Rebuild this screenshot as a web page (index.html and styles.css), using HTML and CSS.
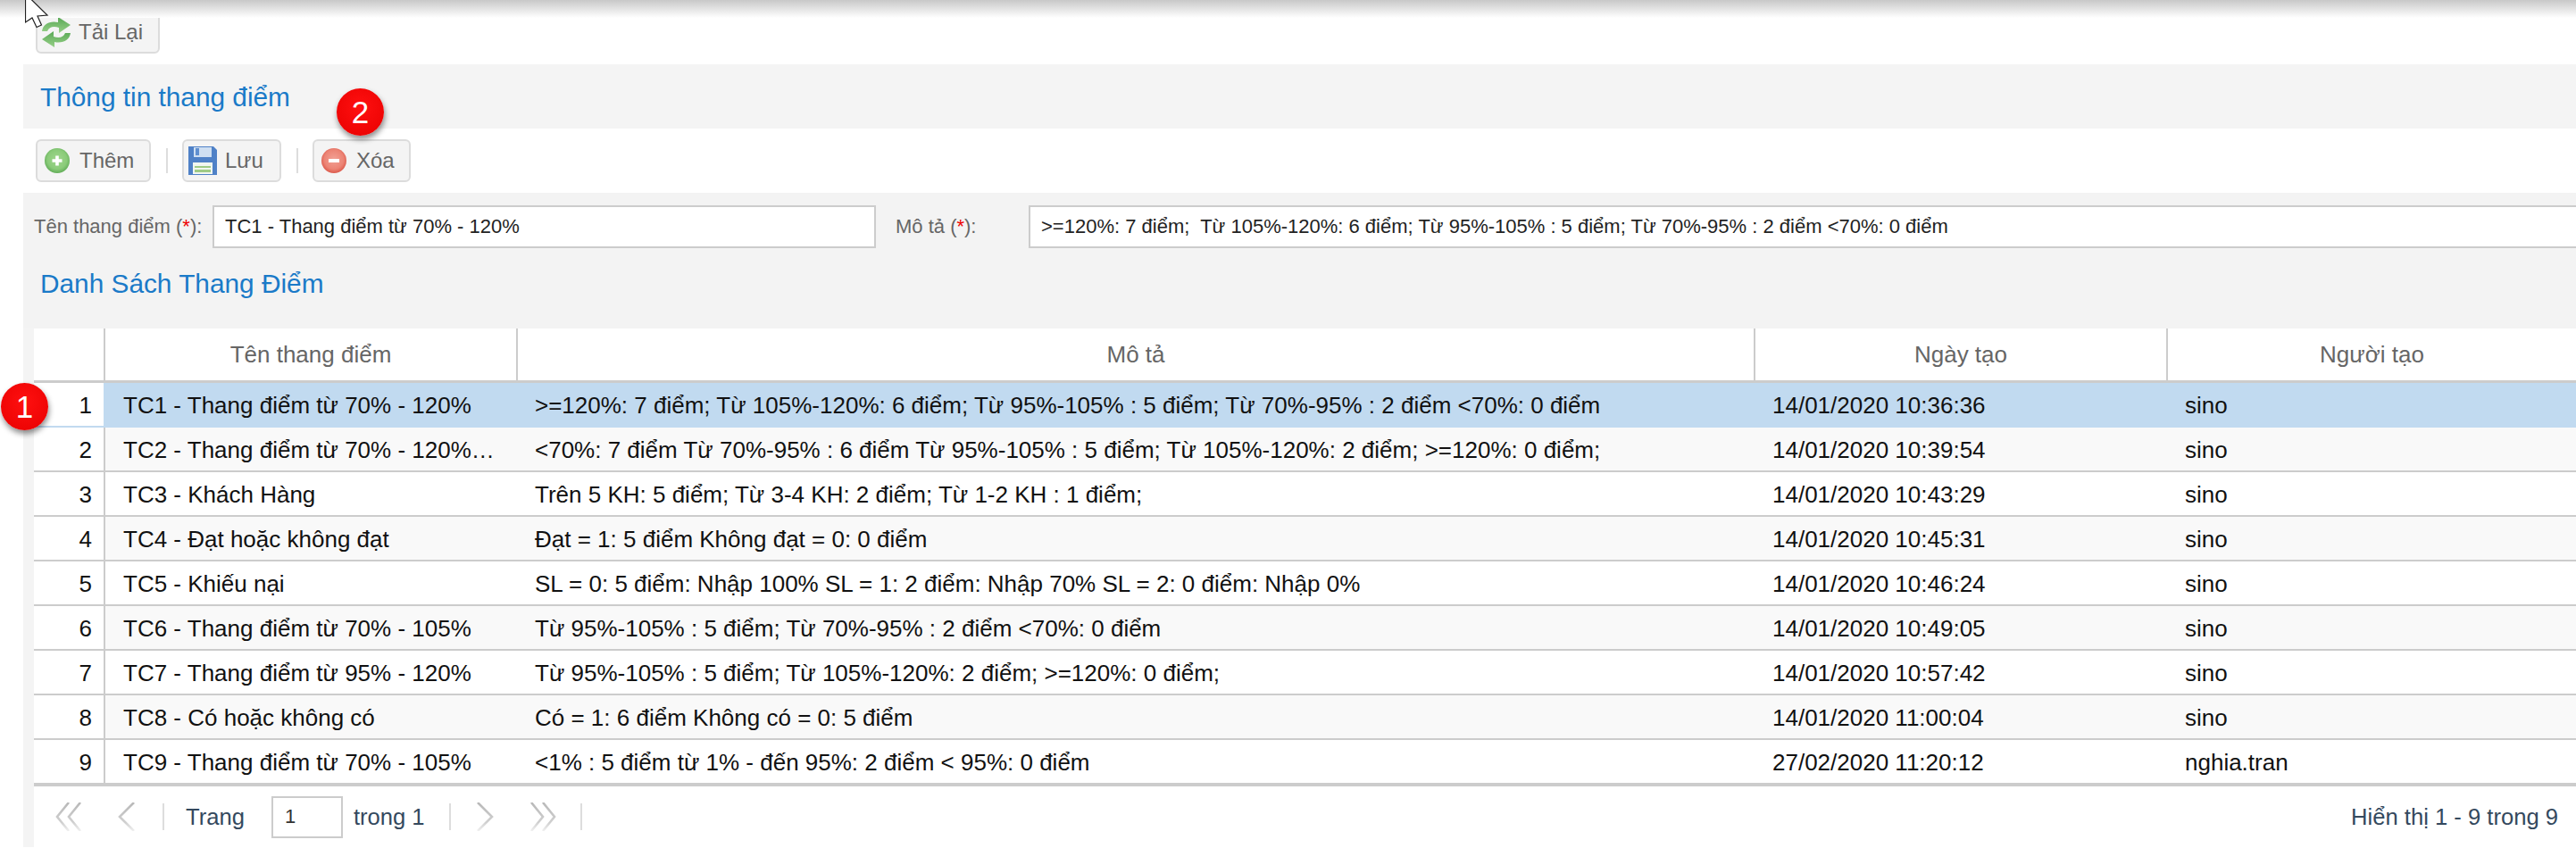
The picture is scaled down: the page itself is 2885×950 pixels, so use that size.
FILE: index.html
```html
<!DOCTYPE html>
<html lang="vi">
<head>
  <meta charset="UTF-8">
  <title>Thang điểm</title>
  <link rel="stylesheet" href="styles.css">
</head>
<body>
  <svg class="defs" width="0" height="0">
    <defs>
      <linearGradient id="fade" gradientUnits="userSpaceOnUse" x1="0" y1="0" x2="0" y2="32">
        <stop offset="0" stop-color="#b8b8b8"/>
        <stop offset="0.7" stop-color="#d0d0d0"/>
        <stop offset="1" stop-color="#f0f0f0"/>
      </linearGradient>
      <linearGradient id="arrow" x1="0" y1="0" x2="0" y2="1">
        <stop offset="0" stop-color="#58a855"/>
        <stop offset="1" stop-color="#97d088"/>
      </linearGradient>
      <radialGradient id="green" cx="0.5" cy="0.45" r="0.55">
        <stop offset="0" stop-color="#a0d78e"/>
        <stop offset="0.7" stop-color="#8acb79"/>
        <stop offset="1" stop-color="#62ad58"/>
      </radialGradient>
      <radialGradient id="red" cx="0.5" cy="0.45" r="0.55">
        <stop offset="0" stop-color="#f2a195"/>
        <stop offset="0.7" stop-color="#ec8475"/>
        <stop offset="1" stop-color="#dc5a4c"/>
      </radialGradient>
    </defs>
  </svg>

  <div class="top-shade"></div>
  <svg class="cursor" width="30" height="32" viewBox="28 0 30 32">
    <path d="M28.5 -7 L53 17 L42 18 L46.5 28 L41 30.5 L36 20 L28.5 25 Z" fill="#fff" stroke="#222" stroke-width="1.2"/>
  </svg>

  <span class="badge badge-two">2</span>
  <span class="badge badge-one">1</span>

  <div class="page">
    <div class="toolbar">
      <button class="btn btn-reload">
        <svg width="34" height="34" viewBox="0 0 34 34">
          <path d="M1 16 C2 8 10 4 19 6 L19 0 L33 9 L20 18 L20 12 C14 10 9 11 7 16 Z" fill="url(#arrow)"/>
          <path d="M33 18 C32 26 24 30 15 28 L15 34 L1 25 L14 16 L14 22 C20 24 25 23 27 18 Z" fill="url(#arrow)"/>
        </svg>
        Tải Lại
      </button>
    </div>

    <h3 class="section-title">Thông tin thang điểm</h3>

    <div class="toolbar">
      <button class="btn btn-add">
        <svg width="28" height="28" viewBox="0 0 28 28">
          <circle cx="14" cy="14" r="14" fill="url(#green)"/>
          <path d="M14 8.5v11M8.5 14h11" stroke="#fff" stroke-width="3.6"/>
        </svg>
        Thêm
      </button>
      <span class="sep"></span>
      <button class="btn btn-save">
        <svg width="32" height="32" viewBox="0 0 32 32">
          <path d="M0 0h28l4 4v28H0z" fill="#4f81c7"/>
          <path d="M6 1h20v11H6z" fill="#cfdff2"/>
          <path d="M8 2h4v8H8z" fill="#5f8fd0"/>
          <path d="M5 18h22v13H5z" fill="#f1f6f0"/>
          <path d="M7 22h18v2H7zM7 26h18v3H7z" fill="#9fcb85"/>
        </svg>
        Lưu
      </button>
      <span class="sep"></span>
      <button class="btn btn-del">
        <svg width="28" height="28" viewBox="0 0 28 28">
          <circle cx="14" cy="14" r="14" fill="url(#red)"/>
          <path d="M8 14h12" stroke="#fff" stroke-width="4"/>
        </svg>
        Xóa
      </button>
    </div>

    <div class="panel">
      <form class="form-row">
        <label class="lbl lbl-name">Tên thang điểm (<em>*</em>):</label>
        <input class="txt txt-name" type="text" value="TC1 - Thang điểm từ 70% - 120%">
        <label class="lbl lbl-desc">Mô tả (<em>*</em>):</label>
        <input class="txt txt-desc" type="text" value=">=120%: 7 điểm;  Từ 105%-120%: 6 điểm; Từ 95%-105% : 5 điểm; Từ 70%-95% : 2 điểm <70%: 0 điểm">
      </form>
      <h3 class="list-title">Danh Sách Thang Điểm</h3>
    </div>

    <div class="grid-wrap">
      <table class="grid">
        <colgroup>
          <col class="c-no"><col class="c-name"><col class="c-desc"><col class="c-date"><col>
        </colgroup>
        <thead>
          <tr><th></th><th>Tên thang điểm</th><th>Mô tả</th><th>Ngày tạo</th><th>Người tạo</th></tr>
        </thead>
        <tbody>
          <tr class="selected"><td>1</td><td>TC1 - Thang điểm từ 70% - 120%</td><td>&gt;=120%: 7 điểm; Từ 105%-120%: 6 điểm; Từ 95%-105% : 5 điểm; Từ 70%-95% : 2 điểm &lt;70%: 0 điểm</td><td>14/01/2020 10:36:36</td><td>sino</td></tr>
          <tr><td>2</td><td>TC2 - Thang điểm từ 70% - 120%…</td><td>&lt;70%: 7 điểm Từ 70%-95% : 6 điểm Từ 95%-105% : 5 điểm; Từ 105%-120%: 2 điểm; &gt;=120%: 0 điểm;</td><td>14/01/2020 10:39:54</td><td>sino</td></tr>
          <tr><td>3</td><td>TC3 - Khách Hàng</td><td>Trên 5 KH: 5 điểm; Từ 3-4 KH: 2 điểm; Từ 1-2 KH : 1 điểm;</td><td>14/01/2020 10:43:29</td><td>sino</td></tr>
          <tr><td>4</td><td>TC4 - Đạt hoặc không đạt</td><td>Đạt = 1: 5 điểm Không đạt = 0: 0 điểm</td><td>14/01/2020 10:45:31</td><td>sino</td></tr>
          <tr><td>5</td><td>TC5 - Khiếu nại</td><td>SL = 0: 5 điểm: Nhập 100% SL = 1: 2 điểm: Nhập 70% SL = 2: 0 điểm: Nhập 0%</td><td>14/01/2020 10:46:24</td><td>sino</td></tr>
          <tr><td>6</td><td>TC6 - Thang điểm từ 70% - 105%</td><td>Từ 95%-105% : 5 điểm; Từ 70%-95% : 2 điểm &lt;70%: 0 điểm</td><td>14/01/2020 10:49:05</td><td>sino</td></tr>
          <tr><td>7</td><td>TC7 - Thang điểm từ 95% - 120%</td><td>Từ 95%-105% : 5 điểm; Từ 105%-120%: 2 điểm; &gt;=120%: 0 điểm;</td><td>14/01/2020 10:57:42</td><td>sino</td></tr>
          <tr><td>8</td><td>TC8 - Có hoặc không có</td><td>Có = 1: 6 điểm Không có = 0: 5 điểm</td><td>14/01/2020 11:00:04</td><td>sino</td></tr>
          <tr><td>9</td><td>TC9 - Thang điểm từ 70% - 105%</td><td>&lt;1% : 5 điểm từ 1% - đến 95%: 2 điểm &lt; 95%: 0 điểm</td><td>27/02/2020 11:20:12</td><td>nghia.tran</td></tr>
        </tbody>
      </table>

      <div class="pager">
        <svg class="pg-first" width="32" height="32" viewBox="0 0 32 32"><path d="M15 0 L2 16 L15 32 M28 0 L15 16 L28 32" fill="none" stroke="url(#fade)" stroke-width="2.6"/></svg>
        <svg class="pg-prev" width="22" height="32" viewBox="0 0 22 32"><path d="M19 0 L3 16 L19 32" fill="none" stroke="url(#fade)" stroke-width="2.6"/></svg>
        <span class="pg-sep pg-sep-a"></span>
        <span class="pg-label">Trang</span>
        <input class="pg-input" type="text" value="1">
        <span class="pg-of">trong 1</span>
        <span class="pg-sep pg-sep-b"></span>
        <svg class="pg-next" width="22" height="32" viewBox="0 0 22 32"><path d="M3 0 L19 16 L3 32" fill="none" stroke="url(#fade)" stroke-width="2.6"/></svg>
        <svg class="pg-last" width="32" height="32" viewBox="0 0 32 32"><path d="M4 0 L17 16 L4 32 M17 0 L30 16 L17 32" fill="none" stroke="url(#fade)" stroke-width="2.6"/></svg>
        <span class="pg-sep pg-sep-c"></span>
        <span class="pg-info">Hiển thị 1 - 9 trong 9</span>
      </div>
    </div>
  </div>
</body>
</html>
```

FILE: styles.css
```css
html, body {
  margin: 0;
  height: 950px;
  overflow: hidden;
  background: #fff;
  font-family: "Liberation Sans", Arial, sans-serif;
}
.defs {
  display: block;
  height: 0;
}
.top-shade {
  position: absolute;
  left: 0;
  top: 0;
  right: 0;
  height: 20px;
  background: linear-gradient(#c8c8c8, #fff);
}
.cursor {
  position: absolute;
  left: 28px;
  top: 0;
  z-index: 5;
}
.badge {
  position: absolute;
  z-index: 4;
  width: 53px;
  height: 53px;
  border-radius: 50%;
  background: radial-gradient(circle at 50% 40%, #ff1010, #e80000);
  box-shadow: 1px 4px 6px rgba(0, 0, 0, .45);
  color: #fff;
  font-size: 35px;
  line-height: 53px;
  text-align: center;
}
.badge-two {
  left: 377px;
  top: 99px;
}
.badge-one {
  left: 1px;
  top: 429px;
}

.page {
  padding-left: 26px;
}
.toolbar {
  display: flex;
  align-items: center;
  height: 72px;
  padding-left: 14px;
  box-sizing: border-box;
}
.btn {
  display: flex;
  align-items: center;
  height: 48px;
  padding: 0 0 0 8px;
  box-sizing: border-box;
  background: #f4f4f4;
  border: 2.5px solid #dcdcdc;
  border-radius: 6px;
  font: 24px "Liberation Sans", Arial, sans-serif;
  color: #666;
  gap: 11px;
}
.btn-reload {
  width: 139px;
  padding-left: 4px;
  gap: 8px;
}
.btn-add {
  width: 129px;
}
.btn-save {
  width: 111px;
  gap: 9px;
  padding-left: 5px;
}
.btn-del {
  width: 110px;
}
.sep {
  width: 2px;
  height: 28px;
  margin: 0 16px 0 17px;
  background: #ddd;
}
.section-title, .list-title {
  margin: 0;
  font-size: 29.8px;
  font-weight: normal;
  color: #1a7ac8;
}
.section-title {
  height: 72px;
  line-height: 74px;
  padding-left: 19px;
  background: #f4f4f4;
}

.panel {
  height: 152px;
  background: #f3f3f3;
  box-sizing: border-box;
  padding-top: 14px;
  overflow: hidden;
}
.form-row {
  display: flex;
  align-items: center;
}
.lbl {
  font-size: 22px;
  color: #666;
  white-space: nowrap;
}
.lbl em {
  font-style: normal;
  color: #e00;
}
.lbl-name {
  margin-left: 12px;
  width: 200px;
}
.lbl-desc {
  margin-left: 22px;
  width: 149px;
}
.txt {
  height: 48px;
  box-sizing: border-box;
  padding: 0 12px;
  border: 2.5px solid #ccc;
  background: #fff;
  font: 22px "Liberation Sans", Arial, sans-serif;
  color: #222;
  outline: none;
}
.txt-name {
  width: 743px;
}
.txt-desc {
  flex: 1;
  margin-right: -10px;
}
.list-title {
  margin-top: 20px;
  padding-left: 19px;
  line-height: 40px;
}

.grid-wrap {
  padding-left: 12px;
  background: #f4f4f4;
}
.grid {
  width: 100%;
  table-layout: fixed;
  border-collapse: separate;
  border-spacing: 0;
  background: #fff;
  font-size: 26px;
}
.c-no {
  width: 78px;
}
.c-name {
  width: 462px;
}
.c-desc {
  width: 1386px;
}
.c-date {
  width: 462px;
}
.grid th {
  height: 58px;
  padding: 0;
  font-weight: normal;
  color: #666;
  border-left: 2px solid #ccc;
  border-bottom: 3px solid #ccc;
  box-sizing: content-box;
}
.grid th:first-child {
  border-left: none;
}
.grid td {
  height: 46px;
  padding: 2px 0 0 21px;
  color: #111;
  border-bottom: 2px solid #ccc;
  white-space: nowrap;
  overflow: hidden;
}
.grid td:first-child {
  padding: 2px 13px 0 0;
  text-align: right;
  background: #fff;
}
.grid td:nth-child(2) {
  padding-left: 20px;
  border-left: 2px solid #ccc;
}
.grid tbody tr:nth-child(even) td {
  background: #f9f9f9;
}
.grid tbody tr:nth-child(even) td:first-child {
  background: #fff;
}
.grid tbody tr.selected td {
  background: #c1daf0;
  border-bottom-color: #c1daf0;
  border-left-color: #c1daf0;
}
.grid tbody tr.selected td:first-child {
  background: #fff;
}
.grid tbody tr:last-child td {
  border-bottom-width: 4px;
}

.pager {
  display: flex;
  align-items: center;
  height: 68px;
  background: #fff;
  font-size: 25.6px;
  color: #34495e;
}
.pg-first {
  margin-left: 24px;
}
.pg-prev {
  margin-left: 37px;
}
.pg-sep {
  width: 2px;
  height: 30px;
  background: #ddd;
}
.pg-sep-a {
  margin: 0 24px 0 29px;
}
.pg-input {
  width: 80px;
  height: 47px;
  box-sizing: border-box;
  margin: 0 12px 0 30px;
  padding: 0 0 0 13px;
  border: 2.5px solid #ccc;
  font: 22px "Liberation Sans", Arial, sans-serif;
  color: #333;
  outline: none;
}
.pg-sep-b {
  margin: 0 27px 0 27px;
}
.pg-last {
  margin-left: 37px;
}
.pg-sep-c {
  margin-left: 27px;
}
.pg-info {
  margin-left: auto;
  margin-right: 20px;
  font-size: 25.6px;
}
```
